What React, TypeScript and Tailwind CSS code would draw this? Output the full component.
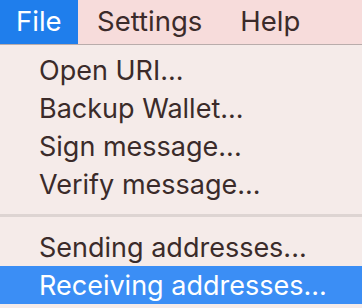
import React from "react";

const items = ["Open URI...", "Backup Wallet...", "Sign message...", "Verify message..."];

export default function App() {
  return (
    <div
      className="w-[362px] h-[308px] overflow-hidden bg-[#f5ebe9] text-[#3b2b2a]"
      style={{ fontFamily: "Inter, 'Liberation Sans', sans-serif" }}
    >
      <div className="flex h-[45px] bg-[#f7dcdb] border-b border-[#b9acab] text-[27.5px] leading-none">
        <div className="w-[78px] pl-[16px] flex items-center bg-[#1f7eec] text-white">File</div>
        <div className="pl-[19px] pr-[19px] flex items-center">Settings</div>
        <div className="pl-[19px] pr-[19px] flex items-center">Help</div>
      </div>
      <div className="pt-[6px] text-[27px] leading-none">
        {items.map((t) => (
          <div key={t} className="h-[38px] pl-[39px] flex items-center">
            {t}
          </div>
        ))}
        <div className="h-[25px] flex items-center">
          <div className="w-full h-[3px] bg-[#ddd4d2]" />
        </div>
        <div className="h-[38px] pl-[39px] flex items-center">Sending addresses...</div>
        <div className="h-[38px] pl-[39px] flex items-center bg-[#3b8ef5] text-white">
          Receiving addresses...
        </div>
      </div>
    </div>
  );
}
